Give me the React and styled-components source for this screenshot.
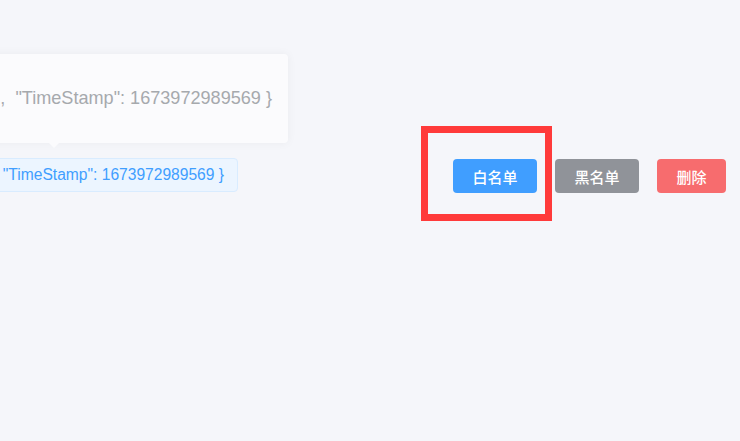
import React from "react";
import styled, { createGlobalStyle } from "styled-components";

const Global = createGlobalStyle`
  html, body { margin: 0; padding: 0; }
  body {
    background: #f5f6fa;
    font-family: "Liberation Sans", "Noto Sans CJK SC", sans-serif;
    overflow: hidden;
  }
`;

const Page = styled.div`
  width: 740px;
  height: 441px;
  overflow: hidden;
  background: #f5f6fa;
`;

const Row = styled.div`
  display: flex;
  align-items: flex-start;
  justify-content: space-between;
  padding-top: 158px;
`;

const TagWrap = styled.div`
  position: relative;
  width: 238px;
  display: flex;
  justify-content: flex-end;
`;

const Tag = styled.span`
  flex-shrink: 0;
  white-space: nowrap;
  box-sizing: border-box;
  width: 258px;
  height: 34px;
  display: inline-flex;
  align-items: center;
  justify-content: flex-end;
  padding: 0 13px 0 0;
  background: #ecf5ff;
  border: 1px solid #d9ecff;
  border-radius: 4px;
  color: #409eff;
  font-size: 15.6px;
`;

const Tooltip = styled.div`
  position: absolute;
  left: -40px;
  right: -50px;
  bottom: calc(100% + 15px);
  height: 89px;
  box-sizing: border-box;
  display: flex;
  align-items: center;
  justify-content: flex-end;
  padding-right: 16px;
  background: #fbfbfd;
  border-radius: 4px;
  box-shadow: 0 0 10px rgba(0, 0, 0, 0.05);
  color: #a6a9ad;
  font-size: 18.1px;
  white-space: pre;
`;

const Arrow = styled.span`
  position: absolute;
  left: 89px;
  top: 100%;
  width: 0;
  height: 0;
  border-left: 5px solid transparent;
  border-right: 5px solid transparent;
  border-top: 5px solid #fbfbfd;
`;

const Actions = styled.div`
  display: flex;
  gap: 18px;
  padding: 1px 14px 0 0;
`;

const ButtonSlot = styled.div`
  position: relative;
`;

const palette = {
  primary: "#409eff",
  info: "#909399",
  danger: "#f76c6e",
};

const Button = styled.button`
  height: 34px;
  padding: 0 19.5px;
  border: none;
  border-radius: 4px;
  background: ${(p) => palette[p.$kind]};
  color: #fff;
  font-family: "Noto Sans CJK SC", sans-serif;
  font-size: 15px;
  font-weight: 500;
  cursor: pointer;
`;

const Highlight = styled.span`
  position: absolute;
  top: -33px;
  left: -32px;
  right: -15px;
  bottom: -28px;
  border: 7px solid #ff3a3a;
  pointer-events: none;
`;

export default function App() {
  return (
    <Page>
      <Global />
      <Row>
        <TagWrap>
          <Tooltip>
            {',  "TimeStamp": 1673972989569 }'}
            <Arrow />
          </Tooltip>
          <Tag>{'"TimeStamp": 1673972989569 }'}</Tag>
        </TagWrap>
        <Actions>
          <ButtonSlot>
            <Button $kind="primary">白名单</Button>
            <Highlight />
          </ButtonSlot>
          <ButtonSlot>
            <Button $kind="info">黑名单</Button>
          </ButtonSlot>
          <ButtonSlot>
            <Button $kind="danger">删除</Button>
          </ButtonSlot>
        </Actions>
      </Row>
    </Page>
  );
}
